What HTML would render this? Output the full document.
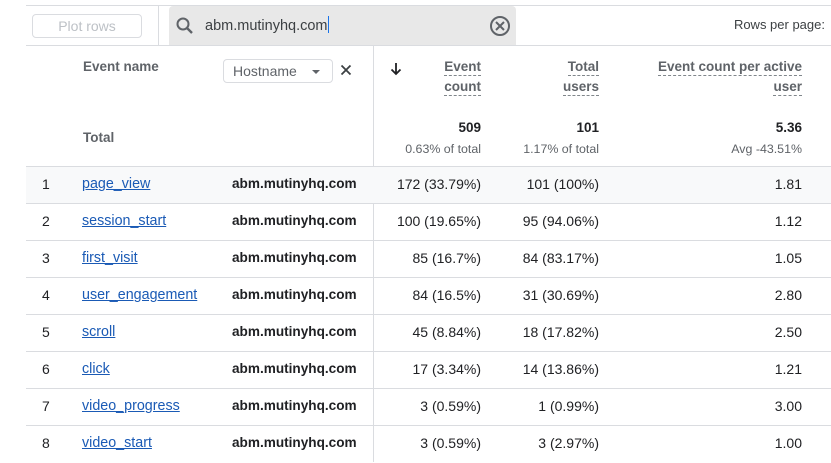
<!DOCTYPE html>
<html><head><style>
*{margin:0;padding:0;box-sizing:border-box}
body{width:831px;height:462px;overflow:hidden;background:#fff;font-family:"Liberation Sans",Arial,sans-serif;color:#202124;position:relative}
.a{position:absolute;white-space:nowrap}
.hl{position:absolute;left:26px;right:0;height:1px;background:#dadce0}
.r{position:absolute;left:26px;right:0;height:37px;font-size:14px}
.r div{position:absolute;top:9px}
.lnk{color:#1a5ab5;text-decoration:underline;font-size:14.3px}
.hn{font-weight:bold;color:#202124;font-size:13.6px}
.dot{border-bottom:1px dashed #80868b;padding-bottom:1px}
.hd{font-size:13.5px;color:#5f6368;font-weight:bold;text-align:right;line-height:20px}
</style></head><body>
<div class="hl" style="top:5px"></div>
<div class="a" style="left:32px;top:14px;width:110px;height:24px;border:1px solid #dadce0;border-radius:4px;font-size:14px;color:#bdc1c6;text-align:center;line-height:22px">Plot rows</div>
<div class="a" style="left:158px;top:6px;width:1px;height:39px;background:#dadce0"></div>
<div class="a" style="left:169px;top:6px;width:347px;height:39px;background:#e8e8e8;border-radius:4px 4px 0 0"></div>
<svg class="a" style="left:175px;top:16px" width="20" height="20" viewBox="0 0 20 20"><circle cx="8" cy="8" r="5.5" fill="none" stroke="#5f6368" stroke-width="2"/><path d="M12 12l5 5" stroke="#5f6368" stroke-width="2.4"/></svg>
<div class="a" style="left:205px;top:16px;font-size:14.5px;color:#3c4043">abm.mutinyhq.com<span style="display:inline-block;width:1px;height:17px;background:#1a73e8;vertical-align:-3px"></span></div>
<svg class="a" style="left:489px;top:15px" width="22" height="22" viewBox="0 0 22 22"><circle cx="11" cy="11" r="9" fill="none" stroke="#5f6368" stroke-width="2"/><path d="M7 7l8 8M15 7l-8 8" stroke="#5f6368" stroke-width="2"/></svg>
<div class="a" style="right:6px;top:17px;font-size:13px;color:#3c4043">Rows per page:</div>
<div class="hl" style="top:45px"></div>
<div class="a" style="left:373px;top:46px;width:1px;height:416px;background:#dadce0"></div>
<div class="a" style="left:83px;top:59px;font-size:13.5px;font-weight:bold;color:#5f6368">Event name</div>
<div class="a" style="left:223px;top:59px;width:110px;height:24px;border:1px solid #dadce0;border-radius:4px;font-size:14px;color:#5f6368;line-height:22px;padding-left:9px">Hostname<span style="position:absolute;left:88px;top:10px;border:4px solid transparent;border-top:4px solid #5f6368;border-bottom:0"></span></div>
<svg class="a" style="left:340px;top:64px" width="12" height="12" viewBox="0 0 12 12"><path d="M1.5 1.5l9 9M10.5 1.5l-9 9" stroke="#3c4043" stroke-width="1.8"/></svg>
<svg class="a" style="left:389px;top:62px" width="14" height="14" viewBox="0 0 14 14"><path d="M7 1v11M2.5 7.5L7 12l4.5-4.5" fill="none" stroke="#202124" stroke-width="1.8"/></svg>
<div class="a" style="left:83px;top:130px;font-size:13.5px;font-weight:bold;color:#5f6368">Total</div>
<div class="a hd" style="right:350px;top:57px"><span class="dot">Event</span><br><span class="dot">count</span></div>
<div class="a hd" style="right:232px;top:57px"><span class="dot">Total</span><br><span class="dot">users</span></div>
<div class="a hd" style="right:29px;top:57px"><span class="dot">Event count per active</span><br><span class="dot">user</span></div>
<div class="a" style="right:350px;top:120px;font-size:13.5px;font-weight:bold">509</div>
<div class="a" style="right:232px;top:120px;font-size:13.5px;font-weight:bold">101</div>
<div class="a" style="right:29px;top:120px;font-size:13.5px;font-weight:bold">5.36</div>
<div class="a" style="right:350px;top:142px;font-size:12.4px;color:#5f6368">0.63% of total</div>
<div class="a" style="right:232px;top:142px;font-size:12.4px;color:#5f6368">1.17% of total</div>
<div class="a" style="right:29px;top:142px;font-size:12.4px;color:#5f6368">Avg -43.51%</div>
<div class="hl" style="top:166px"></div>

<div class="r" style="top:167px;background:#f8f9fa"><div style="left:16px">1</div><div style="left:56px" class="lnk">page_view</div><div style="left:206px" class="hn">abm.mutinyhq.com</div><div style="right:350px">172 (33.79%)</div><div style="right:232px">101 (100%)</div><div style="right:29px">1.81</div></div>
<div class="hl" style="top:203px"></div>
<div class="r" style="top:204px"><div style="left:16px">2</div><div style="left:56px" class="lnk">session_start</div><div style="left:206px" class="hn">abm.mutinyhq.com</div><div style="right:350px">100 (19.65%)</div><div style="right:232px">95 (94.06%)</div><div style="right:29px">1.12</div></div>
<div class="hl" style="top:240px"></div>
<div class="r" style="top:241px"><div style="left:16px">3</div><div style="left:56px" class="lnk">first_visit</div><div style="left:206px" class="hn">abm.mutinyhq.com</div><div style="right:350px">85 (16.7%)</div><div style="right:232px">84 (83.17%)</div><div style="right:29px">1.05</div></div>
<div class="hl" style="top:277px"></div>
<div class="r" style="top:278px"><div style="left:16px">4</div><div style="left:56px" class="lnk">user_engagement</div><div style="left:206px" class="hn">abm.mutinyhq.com</div><div style="right:350px">84 (16.5%)</div><div style="right:232px">31 (30.69%)</div><div style="right:29px">2.80</div></div>
<div class="hl" style="top:314px"></div>
<div class="r" style="top:315px"><div style="left:16px">5</div><div style="left:56px" class="lnk">scroll</div><div style="left:206px" class="hn">abm.mutinyhq.com</div><div style="right:350px">45 (8.84%)</div><div style="right:232px">18 (17.82%)</div><div style="right:29px">2.50</div></div>
<div class="hl" style="top:351px"></div>
<div class="r" style="top:352px"><div style="left:16px">6</div><div style="left:56px" class="lnk">click</div><div style="left:206px" class="hn">abm.mutinyhq.com</div><div style="right:350px">17 (3.34%)</div><div style="right:232px">14 (13.86%)</div><div style="right:29px">1.21</div></div>
<div class="hl" style="top:388px"></div>
<div class="r" style="top:389px"><div style="left:16px">7</div><div style="left:56px" class="lnk">video_progress</div><div style="left:206px" class="hn">abm.mutinyhq.com</div><div style="right:350px">3 (0.59%)</div><div style="right:232px">1 (0.99%)</div><div style="right:29px">3.00</div></div>
<div class="hl" style="top:425px"></div>
<div class="r" style="top:426px"><div style="left:16px">8</div><div style="left:56px" class="lnk">video_start</div><div style="left:206px" class="hn">abm.mutinyhq.com</div><div style="right:350px">3 (0.59%)</div><div style="right:232px">3 (2.97%)</div><div style="right:29px">1.00</div></div>
</body></html>
